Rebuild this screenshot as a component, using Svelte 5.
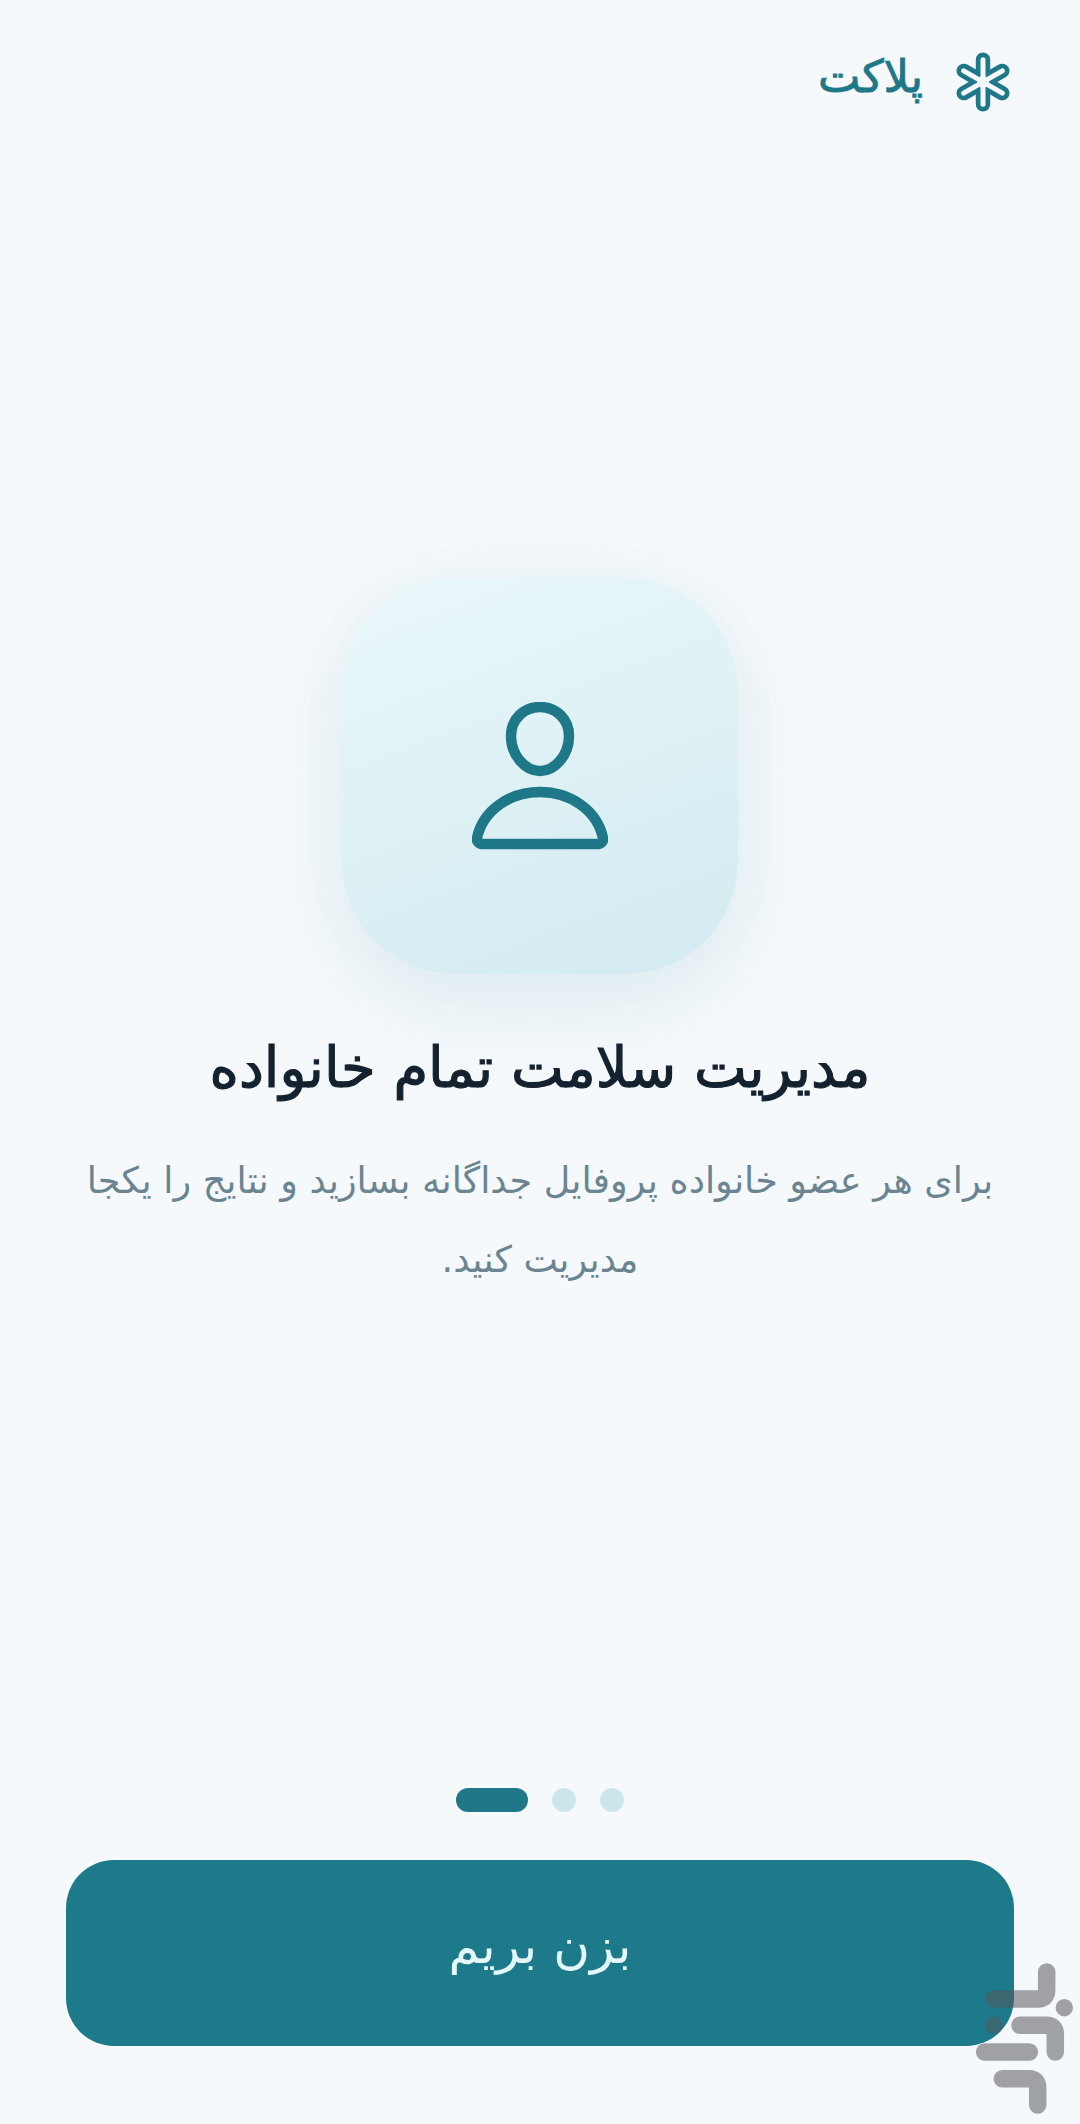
<script>
  const dots = [false, false, true];
  const bars = [0, 60, 120];
</script>

<div class="screen" dir="rtl">
  <header class="top">
    <svg class="logo" viewBox="0 0 64 64" aria-hidden="true">
      <g class="logo-line">
        {#each bars as angle}
          <rect x="29.5" y="7.2" width="5" height="49.6" rx="2.5" transform="rotate({angle} 32 32)" />
        {/each}
      </g>
      <g class="logo-fill">
        {#each bars as angle}
          <rect x="29.5" y="7.2" width="5" height="49.6" rx="2.5" transform="rotate({angle} 32 32)" />
        {/each}
        <circle cx="32" cy="32" r="6" />
      </g>
    </svg>
    <span class="brand">پلاکت</span>
  </header>

  <main class="slide">
    <div class="card">
      <svg class="person" viewBox="0 0 136 148" aria-hidden="true">
        <path d="M68 5C52 5 39 17 39 34C39 53 53 69 68 69C83 69 97 53 97 34C97 17 84 5 68 5Z" />
        <path d="M10 142H126A5 5 0 0 0 131 136C125 108 98 90 68 90C38 90 11 108 5 136A5 5 0 0 0 10 142Z" />
      </svg>
    </div>
    <h1>مدیریت سلامت تمام خانواده</h1>
    <p>برای هر عضو خانواده پروفایل جداگانه بسازید و نتایج را یکجا مدیریت کنید.</p>
  </main>

  <div class="dots">
    {#each dots as active}
      <span class="dot" class:active></span>
    {/each}
  </div>

  <button class="go">بزن بریم</button>

  <svg class="mark" viewBox="0 0 100 160" aria-hidden="true">
    <g>
      <path d="M70.7 12V30Q70.7 39 61.7 39H18" />
      <path d="M44 65.3H70.3Q79.3 65.3 79.3 74.3V92" />
      <path d="M8.7 92H53.3" />
      <path d="M26.3 118.7H52.7Q61.7 118.7 61.7 127.7V145" />
    </g>
    <circle cx="88.3" cy="47.7" r="8.7" />
    <circle cx="18" cy="65" r="8.7" />
  </svg>
</div>

<style>
  :global(body) {
    margin: 0;
    background: #f5f9fc;
  }

  .screen {
    position: relative;
    width: 1080px;
    height: 2124px;
    box-sizing: border-box;
    overflow: hidden;
    display: flex;
    flex-direction: column;
    font-family: "DejaVu Sans", sans-serif;
    background: #f5f9fc;
  }

  .top {
    display: flex;
    align-items: center;
    gap: 28px;
    height: 64px;
    padding: 50px 65px 0 0;
  }

  .logo {
    width: 64px;
    height: 64px;
  }

  .logo-line rect {
    fill: none;
    stroke: #1f7888;
    stroke-width: 9.4;
  }

  .logo-fill rect,
  .logo-fill circle {
    fill: #f5f9fc;
  }

  .brand {
    font-size: 45px;
    font-weight: 400;
    -webkit-text-stroke: 0.9px #1f7888;
    color: #1f7888;
    line-height: 64px;
    padding-bottom: 10px;
  }

  .slide {
    flex: 1;
    display: flex;
    flex-direction: column;
    align-items: center;
    padding: 464px 66px 0;
  }

  .card {
    width: 396px;
    height: 396px;
    border-radius: 112px;
    display: flex;
    align-items: center;
    justify-content: center;
    background: linear-gradient(160deg, #eaf7fa, #d2ebf0);
    box-shadow: 0 30px 90px rgba(31, 120, 136, 0.1), 0 0 70px rgba(31, 120, 136, 0.025);
  }

  .person {
    width: 136px;
    height: 148px;
  }

  .person path {
    fill: none;
    stroke: #1f7888;
    stroke-width: 10.5;
  }

  h1 {
    margin: 62px 0 0;
    font-size: 56px;
    font-weight: 400;
    -webkit-text-stroke: 1.2px #14212e;
    line-height: 64px;
    color: #14212e;
    text-align: center;
  }

  p {
    margin: 41px 0 0;
    font-size: 36.5px;
    line-height: 79px;
    color: #6a8591;
    text-align: center;
  }

  .dots {
    display: flex;
    justify-content: center;
    gap: 24px;
    margin-bottom: 48px;
  }

  .dot {
    width: 24px;
    height: 24px;
    border-radius: 12px;
    background: #cbe6ea;
  }

  .dot.active {
    width: 72px;
    background: #1f7888;
  }

  .go {
    display: block;
    margin: 0 66px 78px;
    height: 186px;
    border: 0;
    padding: 0 0 14px;
    border-radius: 48px;
    background: #1c7a8a;
    color: #e4f7fa;
    font-family: inherit;
    font-size: 50px;
  }

  .mark {
    position: absolute;
    left: 976px;
    top: 1960px;
    width: 100px;
    height: 160px;
  }

  .mark path {
    fill: none;
    stroke: rgb(87, 87, 90);
    stroke-opacity: 0.54;
    stroke-width: 17.5;
    stroke-linecap: round;
  }

  .mark circle {
    fill: rgb(87, 87, 90);
    fill-opacity: 0.54;
  }
</style>
